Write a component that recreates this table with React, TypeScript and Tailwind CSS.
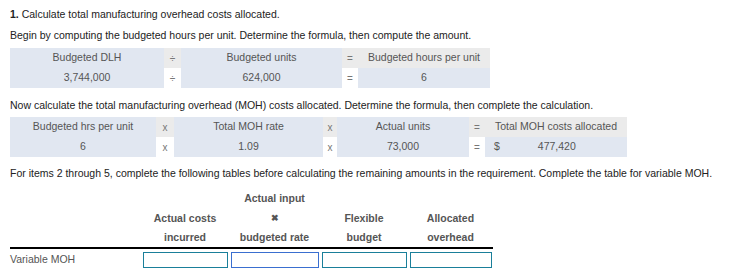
const blue = "bg-[#e1e7f1]";
const grey = "bg-[#ebebeb]";

function Cell({ bg, children, className = "" }: { bg?: string; children?: React.ReactNode; className?: string }) {
  return (
    <div className={`h-[20px] flex items-center justify-center text-[#555] ${bg ?? "bg-white"} ${className}`}>
      {children}
    </div>
  );
}

function Op({ sym, bg }: { sym: string; bg?: string }) {
  return (
    <Cell bg={bg} className="text-[10px] text-[#777]">
      {sym}
    </Cell>
  );
}

export default function App() {
  return (
    <div className="w-[734px] h-[271px] bg-white px-[10px] pt-[7px] text-[10.5px] text-[#222] font-['Liberation_Sans',Arial,sans-serif]">
      <p className="leading-[14px]">
        <b>1.</b> Calculate total manufacturing overhead costs allocated.
      </p>
      <p className="leading-[14px] mt-[7px]">
        Begin by computing the budgeted hours per unit. Determine the formula, then compute the amount.
      </p>

      {/* hours per unit */}
      <div className="mt-[6px] grid grid-cols-[154px_17px_161px_16px_132px] w-fit">
        <Cell bg={blue}>Budgeted DLH</Cell>
        <Op sym="÷" bg={grey} />
        <Cell bg={blue}>Budgeted units</Cell>
        <Op sym="=" bg={grey} />
        <Cell bg={grey}>Budgeted hours per unit</Cell>
        <Cell bg={blue}>3,744,000</Cell>
        <Op sym="÷" />
        <Cell bg={blue}>624,000</Cell>
        <Op sym="=" />
        <Cell bg={blue}>6</Cell>
      </div>

      <p className="leading-[14px] mt-[10px]">
        Now calculate the total manufacturing overhead (MOH) costs allocated. Determine the formula, then complete the calculation.
      </p>

      {/* MOH allocated */}
      <div className="mt-[5px] grid grid-cols-[146px_18px_149px_14px_132px_16px_142px] w-fit">
        <Cell bg={blue}>Budgeted hrs per unit</Cell>
        <Op sym="x" bg={grey} />
        <Cell bg={blue}>Total MOH rate</Cell>
        <Op sym="x" bg={grey} />
        <Cell bg={blue}>Actual units</Cell>
        <Op sym="=" bg={grey} />
        <Cell bg={grey}>Total MOH costs allocated</Cell>
        <Cell bg={blue}>6</Cell>
        <Op sym="x" />
        <Cell bg={blue}>1.09</Cell>
        <Op sym="x" />
        <Cell bg={blue}>73,000</Cell>
        <Op sym="=" />
        <Cell bg={blue} className="!justify-start pl-[9px]">
          <span>$</span>
          <span className="ml-[38px]">477,420</span>
        </Cell>
      </div>

      <p className="leading-[14px] mt-[9px] whitespace-nowrap">
        For items 2 through 5, complete the following tables before calculating the remaining amounts in the requirement. Complete the table for variable MOH.
      </p>

      {/* variable MOH variance table */}
      <div className="mt-[9px] w-[483px] grid grid-cols-[131px_88px_91px_88px_85px] font-bold text-[#555]">
        <div className="h-[20px]" />
        <div />
        <div className="h-[20px] flex items-center justify-center">Actual input</div>
        <div />
        <div />

        <div className="h-[20px]" />
        <div className="h-[20px] flex items-center justify-center">Actual costs</div>
        <div className="h-[20px] flex items-center justify-center text-[9px]">✖</div>
        <div className="h-[20px] flex items-center justify-center">Flexible</div>
        <div className="h-[20px] flex items-center justify-center">Allocated</div>

        <div className="h-[20px] border-b-2 border-black flex items-center justify-center" />
        <div className="h-[20px] border-b-2 border-black flex items-center justify-center">incurred</div>
        <div className="h-[20px] border-b-2 border-black flex items-center justify-center">budgeted rate</div>
        <div className="h-[20px] border-b-2 border-black flex items-center justify-center">budget</div>
        <div className="h-[20px] border-b-2 border-black flex items-center justify-center">overhead</div>

        <div className="h-[22px] flex items-center font-normal text-[#555]">Variable MOH</div>
        <div className="h-[22px] flex items-center pl-[2px] pr-[1px]">
          <input className="w-full h-[16px] border border-[#1a7f9a] outline-none" />
        </div>
        <div className="h-[22px] flex items-center pl-[2px] pr-[1px]">
          <input className="w-full h-[16px] border border-[#3a6fd0] outline-none" />
        </div>
        <div className="h-[22px] flex items-center pl-[2px] pr-[1px]">
          <input className="w-full h-[16px] border border-[#1a7f9a] outline-none" />
        </div>
        <div className="h-[22px] flex items-center pl-[2px] pr-[1px]">
          <input className="w-full h-[16px] border border-[#1a7f9a] outline-none" />
        </div>
      </div>
    </div>
  );
}
